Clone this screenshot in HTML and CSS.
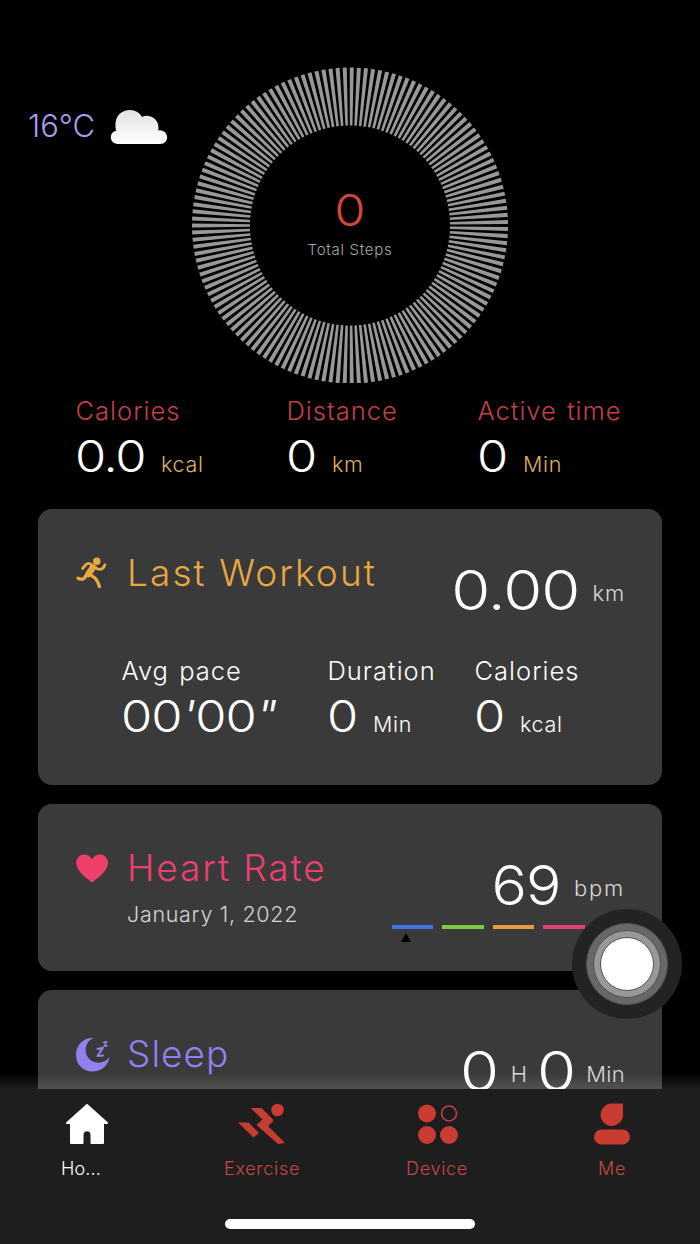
FILE: index.html
```html
<!DOCTYPE html>
<html lang="en">
<head>
    <meta charset="UTF-8">
    <meta name="viewport" content="width=device-width, initial-scale=1.0">
    <title>Home</title>
    <link rel="stylesheet" href="styles.css">
</head>
<body>
    <div class="screen">
        <main>
            <section class="hero">
                <div class="weather">
                    <span>16°C</span>
                    <svg class="cloud" width="58" height="36" viewBox="0 0 58 36">
                        <defs>
                            <linearGradient id="cloud-fill" x1="0" y1="0" x2="0" y2="1">
                                <stop offset="0" stop-color="#e2e2e2"/>
                                <stop offset="1" stop-color="#ffffff"/>
                            </linearGradient>
                        </defs>
                        <path fill="url(#cloud-fill)" d="M7.500 20.500H6C3.500 9 9 0 20 0C25.500 0 30 3 32 7C38 3.500 49 8 48.500 18.500L48 20.200H50C59.500 20.700 59.500 34 50 34H8C-1.500 34-1.500 21 7.500 20.500Z"/>
                    </svg>
                </div>
                <div class="ring">
                    <svg width="316" height="316" viewBox="0 0 316 316">
                        <circle cx="158" cy="158.500" r="129" pathLength="1390"/>
                    </svg>
                    <div class="ring-text">
                        <div class="steps">0</div>
                        <div class="steps-label">Total Steps</div>
                    </div>
                </div>
            </section>

            <section class="stats">
                <div class="stat">
                    <div class="label">Calories</div>
                    <div class="row"><span class="value decimal">0.0</span><span class="unit">kcal</span></div>
                </div>
                <div class="stat">
                    <div class="label">Distance</div>
                    <div class="row"><span class="value">0</span><span class="unit">km</span></div>
                </div>
                <div class="stat">
                    <div class="label">Active time</div>
                    <div class="row"><span class="value">0</span><span class="unit">Min</span></div>
                </div>
            </section>

            <section class="card workout">
                <div class="card-head">
                    <svg class="icon" width="34" height="34" viewBox="0 0 34 34">
                        <circle cx="21.800" cy="5.300" r="3.700" fill="#e8a840"/>
                        <g fill="none" stroke="#e8a840" stroke-linecap="round" stroke-linejoin="round">
                            <path stroke-width="2.800" d="M7.500 12.500L11 8.500C12.500 7 14.500 7 17 9L22.500 13C26 14 28.500 12.500 30 8.700"/>
                            <path stroke-width="6.500" d="M17.800 11.500L13.500 18"/>
                            <path stroke-width="3.400" d="M12.500 17.500L9.500 22C7.500 23.800 5 23.300 3 22.300M14.500 18L20.500 22.500C22.500 25 23.500 27.500 24.500 30.500"/>
                        </g>
                    </svg>
                    <h2>Last Workout</h2>
                    <div class="reading"><span class="big">0.00</span><span class="big-unit">km</span></div>
                </div>
                <div class="details">
                    <div class="stat">
                        <div class="label">Avg pace</div>
                        <div class="row"><span class="value pace">00<i>'</i>00<i>"</i></span></div>
                    </div>
                    <div class="stat">
                        <div class="label">Duration</div>
                        <div class="row"><span class="value">0</span><span class="unit">Min</span></div>
                    </div>
                    <div class="stat">
                        <div class="label">Calories</div>
                        <div class="row"><span class="value">0</span><span class="unit">kcal</span></div>
                    </div>
                </div>
            </section>

            <section class="card heart">
                <div class="card-head">
                    <svg class="icon" width="34" height="34" viewBox="0 0 34 34">
                        <path fill="#ee4068" d="M17 31.500C12.500 28 1.200 20.500 1.200 11.800C1.200 3 13 0 17 8.500C21 0 33 3 33 11.800C33 20.500 21.500 28 17 31.500Z"/>
                    </svg>
                    <div>
                        <h2>Heart Rate</h2>
                        <p class="date">January 1, 2022</p>
                    </div>
                    <div class="reading"><span class="big bpm">69</span><span class="big-unit bpm-unit">bpm</span></div>
                </div>
                <div class="zones">
                    <span class="zone blue"></span>
                    <span class="zone green"></span>
                    <span class="zone orange"></span>
                    <span class="zone pink"></span>
                    <span class="zone red"></span>
                </div>
            </section>

            <section class="card sleep">
                <div class="card-head">
                    <svg class="icon" width="36" height="36" viewBox="0 0 36 36">
                        <path fill="#9380f0" d="M18.500 1C9.500 4.500 9 15.500 13 20.500C18.500 27.500 29 27.500 34.500 20C33 29 26 34.500 17.500 34.500C8 34.500 1 27.500 1 18C1 8.500 8 .500 18.500 1Z"/>
                        <g fill="none" stroke="#9380f0" stroke-linecap="round" stroke-linejoin="round">
                            <path stroke-width="2" d="M22.500 12L28 10.800L22.500 19L28 18.500"/>
                            <path stroke-width="1.400" d="M28.500 5.300L31.800 4.600L29 9.300L32.300 8.800"/>
                        </g>
                    </svg>
                    <h2>Sleep</h2>
                    <div class="reading"><span class="big">0</span><span class="big-unit hours">H</span><span class="big">0</span><span class="big-unit minutes">Min</span></div>
                </div>
            </section>
        </main>

        <nav>
            <a class="tab home">
                <svg width="44" height="42" viewBox="0 0 44 42">
                    <path fill="#fff" stroke="#fff" stroke-width="2" stroke-linejoin="round" d="M22 2L2 20H6V40H17.500V32C17.500 25.500 26.500 25.500 26.500 32V40H38V20H42Z"/>
                </svg>
                <span>Ho...</span>
            </a>
            <a class="tab exercise">
                <svg width="48" height="42" viewBox="0 0 48 42">
                    <g fill="#c83c32">
                        <circle cx="39.500" cy="7" r="6.300"/>
                        <path d="M12.500 5H23.500L35 16.500V18.500L30 23L47 40L40 41L18.500 22L24.500 16.500Z"/>
                        <path d="M0 19.500H10.500L21 30L15.500 34.500Z"/>
                    </g>
                </svg>
                <span>Exercise</span>
            </a>
            <a class="tab device">
                <svg width="40" height="42" viewBox="0 0 40 42">
                    <g fill="#c83c32">
                        <circle cx="9" cy="10.500" r="9"/>
                        <circle cx="9" cy="32" r="9"/>
                        <circle cx="31" cy="32" r="9"/>
                    </g>
                    <circle cx="31" cy="10.500" r="7.500" fill="none" stroke="#c83c4a" stroke-width="1.600"/>
                </svg>
                <span>Device</span>
            </a>
            <a class="tab me">
                <svg width="36" height="42" viewBox="0 0 36 42">
                    <g fill="#c83c32">
                        <path d="M18 .500H28Q29 .500 29 1.500V12A11.200 11.200 0 1 1 18 .500Z"/>
                        <rect x="0" y="26.500" width="36" height="15" rx="7.500"/>
                    </g>
                </svg>
                <span>Me</span>
            </a>
            <div class="home-bar"></div>
        </nav>

        <div class="touch"><div class="touch-outer"><div class="touch-mid"><div class="touch-dot"></div></div></div></div>
    </div>
</body>
</html>
```
FILE: styles.css
```css
* {
    box-sizing: border-box;
}
body {
    margin: 0;
    background: #000;
    color: #fff;
    font-family: Inter, "Liberation Sans", sans-serif;
    font-weight: 300;
    line-height: 1;
}
h2, p {
    margin: 0;
}
svg {
    display: block;
}
.screen {
    position: relative;
    display: flex;
    flex-direction: column;
    width: 700px;
    height: 1244px;
    overflow: hidden;
}
main {
    position: relative;
    flex: 1;
    min-height: 0;
    overflow: hidden;
    padding-top: 67px;
}
/* light haze just above the tab bar */
main::after {
    content: "";
    position: absolute;
    left: 0;
    right: 0;
    bottom: 0;
    height: 16px;
    background: linear-gradient(rgba(255, 255, 255, 0), rgba(255, 255, 255, 0.12));
}

/* steps ring */
.hero {
    display: grid;
    grid-template-columns: 192px 316px;
    height: 317px;
}
.weather {
    display: flex;
    align-items: flex-start;
    gap: 15px;
    padding: 43px 0 0 28px;
    font-size: 31px;
    color: #a99cf5;
}
.ring {
    display: grid;
}
.ring > * {
    grid-area: 1 / 1;
}
.ring circle {
    fill: none;
    stroke: #989898;
    stroke-width: 58;
    stroke-dasharray: 5.7 4.3;
    stroke-dashoffset: -2.15;
}
.ring-text {
    padding-top: 121px;
    text-align: center;
}
.steps {
    font-size: 44px;
    color: #d2443f;
    transform: scaleX(1.15);
}
.steps-label {
    margin-top: 10px;
    font-size: 15px;
    font-weight: 350;
    letter-spacing: 0.7px;
    color: #a6a6a6;
}

/* stats */
.stats {
    display: grid;
    grid-template-columns: 211px 191px auto;
    padding: 14px 0 0 76px;
    height: 125px;
}
.label {
    margin-left: -0.5px;
    font-size: 25.5px;
    font-weight: 350;
    letter-spacing: 1px;
    word-spacing: 2px;
    white-space: nowrap;
}
.row {
    display: flex;
    align-items: baseline;
    margin: 10px 0 0 -1px;
}
.value {
    width: 46px;
    font-size: 44px;
    transform: scaleX(1.15);
    transform-origin: left;
}
.value.decimal {
    width: 86px;
    letter-spacing: -1.2px;
}
.unit {
    font-size: 21.5px;
    font-weight: 350;
    letter-spacing: 0.7px;
}
.stats .label {
    color: #c24048;
}
.stats .unit {
    color: #dfae62;
}

/* cards */
.card {
    margin: 0 38px 19px;
    padding: 45px 38px 0;
    background: #3a3a3a;
    border-radius: 14px;
}
.card-head {
    display: flex;
    align-items: flex-start;
    height: 100px;
}
.icon {
    flex: none;
    margin: 2px 18px 0 -1px;
}
h2 {
    font-size: 37px;
    font-weight: 300;
    letter-spacing: 1.9px;
}
.reading {
    display: flex;
    align-items: center;
    margin: 9px 0 0 auto;
}
.big {
    font-size: 55px;
    letter-spacing: -0.8px;
    transform: scaleX(1.15);
    transform-origin: right;
}
.big.bpm {
    transform: scaleX(1.07);
}
.big-unit {
    margin: 4px -1px 0 13px;
    font-size: 22px;
    letter-spacing: 0.9px;
    color: #d8d8d8;
}
.big-unit.bpm-unit {
    letter-spacing: 1.8px;
}
.workout {
    height: 276px;
}
.workout h2 {
    letter-spacing: 2.1px;
    color: #e8a840;
}
.details {
    display: grid;
    grid-template-columns: 206px 147px auto;
    padding: 4px 0 0 46px;
}
.value.pace {
    width: auto;
    letter-spacing: -0.9px;
}
.heart {
    height: 167px;
}
.heart h2 {
    color: #ec4070;
}
.date {
    margin-top: 18px;
    font-size: 21.5px;
    font-weight: 350;
    letter-spacing: 0.7px;
    color: #d4d4d4;
}
.zones {
    position: relative;
    display: flex;
    justify-content: flex-end;
    gap: 9px;
    margin: -24px -11px 0 0;
}
.zone {
    width: 41.5px;
    height: 4px;
}
.blue {
    position: relative;
    background: #4274e6;
}
.blue::after {
    content: "";
    position: absolute;
    left: 9px;
    top: 8px;
    border: solid transparent;
    border-width: 0 5px 9px;
    border-bottom-color: #000;
}
.green { background: #80c846; }
.orange { background: #ec9a40; }
.pink { background: #e0407c; }
.red { background: #e04040; }
.sleep {
    height: 167px;
}
.sleep .icon {
    margin-right: 16px;
}
.sleep h2 {
    letter-spacing: 1px;
    color: #9380f0;
}
.big-unit.hours {
    margin-right: 14px;
}
.big-unit.minutes {
    margin-left: 11px;
    letter-spacing: 0.3px;
}

/* tab bar */
nav {
    position: relative;
    display: flex;
    justify-content: space-between;
    height: 155px;
    padding: 14px 43px 0 42px;
    background: #1e1e1e;
}
.tab {
    display: flex;
    flex-direction: column;
    align-items: center;
    width: 90px;
    font-size: 18px;
    font-weight: 350;
    letter-spacing: 0.7px;
    color: #cc4448;
}
.tab span {
    margin-top: 15px;
}
.tab.home {
    color: #fff;
}
.home span {
    margin-left: -12px;
    letter-spacing: 0.2px;
}
.device svg {
    margin-left: 2px;
}
.home-bar {
    position: absolute;
    left: 225px;
    bottom: 15px;
    width: 250px;
    height: 10px;
    border-radius: 5px;
    background: #fff;
}

/* floating touch button */
.touch {
    position: absolute;
    left: 572px;
    top: 909px;
    border-radius: 50%;
    padding: 14px;
    background: #232323;
}
.touch-outer {
    padding: 6px;
    border: 1px solid #555;
    border-radius: 50%;
    background: #686868;
}
.touch-mid {
    padding: 6px;
    border: 1px solid #505050;
    border-radius: 50%;
    background: #989898;
}
.touch-dot {
    width: 54px;
    height: 54px;
    border: 1px solid #505050;
    border-radius: 50%;
    background: #fff;
}
```
